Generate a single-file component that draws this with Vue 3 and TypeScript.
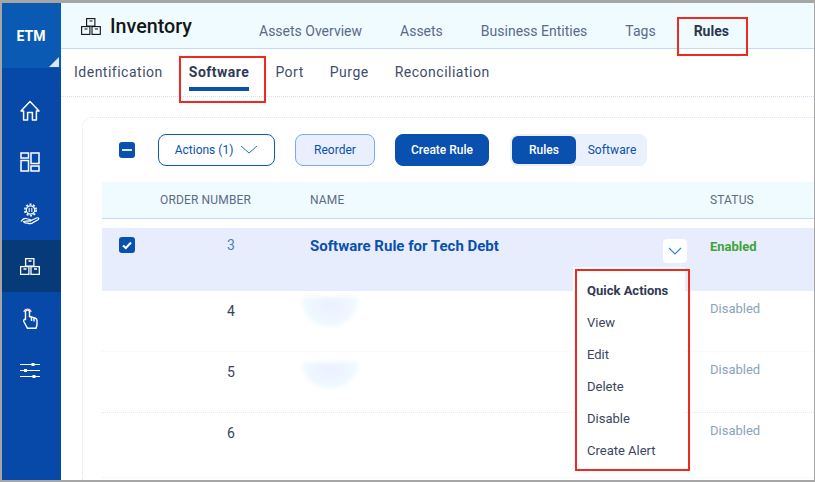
<script setup lang="ts">
const topTabs = ['Assets Overview', 'Assets', 'Business Entities', 'Tags', 'Rules']
const subTabs = ['Identification', 'Software', 'Port', 'Purge', 'Reconciliation']
const rows = [
  { n: 4, blob: 'down' },
  { n: 5, blob: 'up' },
  { n: 6, blob: '' },
]
const menu = ['View', 'Edit', 'Delete', 'Disable', 'Create Alert']
</script>

<template>
  <div class="frame">
    <aside class="sidebar">
      <div class="brand">ETM<span class="corner"></span></div>
      <nav class="rail">
        <div class="rail-item">
          <svg viewBox="0 0 20 21" width="20" height="21" fill="none" stroke="#fff" stroke-width="1.500" stroke-linejoin="round"><path d="M1 11 10 1.500 19 11h-2.600v9h-4v-7.500H7.600V20h-4v-9z"/></svg>
        </div>
        <div class="rail-item">
          <svg viewBox="0 0 20 20" width="20" height="20" fill="none" stroke="#fff" stroke-width="1.500"><rect x="1" y="1" width="7.500" height="5" /><rect x="1" y="8.500" width="7.500" height="10.500"/><rect x="11" y="1" width="8" height="10.500"/><rect x="11" y="14" width="8" height="5"/></svg>
        </div>
        <div class="rail-item">
          <svg viewBox="0 0 20 22" width="20" height="22" fill="none" stroke="#fff" stroke-width="1.200"><circle cx="10.500" cy="7" r="4.200"/><circle cx="10.500" cy="7" r="5.700" stroke-width="1.600" stroke-dasharray="2 1.600"/><path d="M9.200 5v4M11.800 5v4" stroke-width="1"/><path d="M1 18.500c2-3 4.200-3.500 6-2.700l3 .7c1.500.4 1.200 1.700-.5 1.700H7m3.500-.5 6-2.700c2-.8 3 .8 1.500 1.800l-6 3.300c-1.800.8-3.300.5-4.500 0l-2.500-.2c-.8 0-1.200-.7-1.500-1.400z"/></svg>
        </div>
        <div class="rail-item active">
          <svg viewBox="0 0 20 17" width="20" height="17" fill="none" stroke="#fff" stroke-width="1.300"><rect x="5.600" y=".6" width="8.300" height="7.500"/><rect x=".6" y="8.600" width="8.300" height="7.800"/><rect x="11" y="8.600" width="8.300" height="7.800"/><path d="M8.500 3h3M3.500 11h3M14 11h3"/></svg>
        </div>
        <div class="rail-item">
          <svg viewBox="0 0 15 22" width="15" height="22" fill="none" stroke="#fff" stroke-width="1.400" stroke-linejoin="round"><path d="M2.500 12.500V5a2 2 0 0 1 4 0v4.500l5.500 1.500c1.200.4 2 1 2 2.500V18l-1 3.300H4.500L.8 14.500c-.6-1.500 1-2.800 1.700-2z"/><path d="M.9 5a3.700 3.700 0 0 1 7.200 0" stroke="#f3c6f3"/><path d="M8.500 10v4M11 11v3.500"/></svg>
        </div>
        <div class="rail-item">
          <svg viewBox="0 0 20 15" width="20" height="15" fill="#fff" stroke="#fff" stroke-width="1"><path d="M0 1.500h20M0 7.500h20M0 13.500h20"/><rect x="11.500" y="0" width="3" height="3" stroke="none"/><rect x="4" y="6" width="3" height="3" stroke="none"/><rect x="12.500" y="12" width="3" height="3" stroke="none"/></svg>
        </div>
      </nav>
    </aside>

    <main class="main">
      <header class="topbar">
        <div class="title">
          <svg viewBox="0 0 20 17" width="20" height="17" fill="none" stroke="#111" stroke-width="1.100"><rect x="5.600" y=".6" width="8.300" height="7.500"/><rect x=".6" y="8.600" width="8.300" height="7.800"/><rect x="11" y="8.600" width="8.300" height="7.800"/><path d="M8.500 3h3M3.500 11h3M14 11h3"/></svg>
          <span>Inventory</span>
        </div>
        <div class="top-tabs">
          <span v-for="t in topTabs" :key="t" class="top-tab" :class="{ on: t === 'Rules' }">{{ t }}</span>
        </div>
      </header>

      <div class="subnav">
        <span v-for="t in subTabs" :key="t" class="sub-tab" :class="{ on: t === 'Software' }">{{ t }}</span>
      </div>

      <section class="body">
        <div class="card">
          <div class="toolbar">
            <span class="check"><i class="dash"></i></span>
            <button class="btn outline">Actions (1)
              <svg viewBox="0 0 18 9" width="18" height="9" fill="none" stroke="#2a6cc4" stroke-width="1"><path d="M1 1l8 7 8-7"/></svg>
            </button>
            <button class="btn soft">Reorder</button>
            <button class="btn solid">Create Rule</button>
            <div class="toggle">
              <span class="seg on">Rules</span>
              <span class="seg">Software</span>
            </div>
          </div>

          <div class="table">
            <div class="thead">
              <span></span><span>ORDER NUMBER</span><span>NAME</span><span>STATUS</span>
            </div>
            <div class="tr selected">
              <span class="check"><svg viewBox="0 0 16 16" width="16" height="16" fill="none" stroke="#fff" stroke-width="2"><path d="M4 8.500 6.800 11 12 5.500"/></svg></span>
              <span class="num sel-num">3</span>
              <span class="rule-name">Software Rule for Tech Debt
                <span class="row-caret"><svg viewBox="0 0 14 8" width="14" height="8" fill="none" stroke="#2f7fe0" stroke-width="1.100"><path d="M1 1l6 6 6-6"/></svg></span>
              </span>
              <span class="enabled">Enabled</span>
            </div>
            <div v-for="r in rows" :key="r.n" class="tr plain">
              <span></span>
              <span class="num">{{ r.n }}</span>
              <span class="name-cell"><i v-if="r.blob" class="blob" :class="r.blob"></i></span>
              <span class="disabled">Disabled</span>
            </div>
          </div>
        </div>
      </section>
    </main>

    <div class="popup">
      <div class="popup-head">Quick Actions</div>
      <div v-for="m in menu" :key="m" class="popup-item">{{ m }}</div>
    </div>

    <i class="mark mark-rules"></i>
    <i class="mark mark-software"></i>
  </div>
</template>

<style>
html, body { margin: 0; background: #fff; }
</style>

<style scoped>
.frame {
  position: relative;
  display: flex;
  box-sizing: border-box;
  width: 815px;
  height: 482px;
  overflow: hidden;
  padding: 3px 1px 2px 2px;
  background: #a6a6a6;
  font-family: Roboto, "Liberation Sans", sans-serif;
}
.sidebar {
  display: flex;
  flex-direction: column;
  flex: 0 0 59px;
  background: #0749a8;
}
.brand {
  position: relative;
  display: flex;
  align-items: center;
  justify-content: center;
  height: 65px;
  padding-right: 1px;
  box-sizing: border-box;
  color: #fff;
  font-size: 14px;
  font-weight: 700;
  background: #0a5ab4;
}
.corner {
  position: absolute;
  right: 2px;
  bottom: 1px;
  width: 0;
  height: 0;
  border-left: 10px solid transparent;
  border-bottom: 10px solid #dbe9fb;
}
.rail { display: flex; flex-direction: column; padding-top: 16px; }
.rail-item {
  display: flex;
  align-items: center;
  justify-content: center;
  box-sizing: border-box;
  height: 52px;
  padding-right: 3px;
}
.rail-item.active { background: #073a78; }
.main {
  display: flex;
  flex-direction: column;
  flex: 1;
  min-width: 0;
  background: #fff;
}
.topbar {
  display: flex;
  box-sizing: border-box;
  height: 46px;
  flex: none;
  padding-left: 20px;
  background: #effbff;
  border-bottom: 1px solid #c3d9f7;
}
.title {
  display: flex;
  align-items: center;
  gap: 9px;
  width: 178px;
  height: 46px;
  font-size: 19.700px;
  font-weight: 500;
  color: #15161a;
}
.top-tabs {
  display: flex;
  align-items: center;
  gap: 38px;
  height: 56px;
}
.top-tab { font-size: 14px; color: #5a6a8a; }
.top-tab.on { font-weight: 700; color: #2a3550; }
.subnav {
  display: flex;
  align-items: center;
  box-sizing: border-box;
  flex: none;
  height: 48px;
  padding: 0 0 2px 13px;
  gap: 26px;
  border-bottom: 1px dotted #cfe0f7;
}
.sub-tab {
  position: relative;
  font-size: 14px;
  letter-spacing: .5px;
  color: #3f4d6b;
}
.sub-tab.on { font-weight: 700; color: #2f3a55; }
.sub-tab.on::after {
  content: "";
  position: absolute;
  left: 0;
  right: 0;
  bottom: -11px;
  height: 4px;
  background: #0a50ae;
}
.body {
  flex: 1;
  min-height: 0;
  padding: 20px 0 0 21px;
}
.card {
  box-sizing: border-box;
  height: 100%;
  padding: 15px 0 0 19px;
  border: 1px dotted #d7e8f6;
  border-right: 0;
  border-bottom: 0;
  border-top-left-radius: 10px;
}
.toolbar {
  display: flex;
  align-items: center;
  height: 33px;
}
.check {
  display: inline-flex;
  align-items: center;
  justify-content: center;
  flex: none;
  width: 16px;
  height: 16px;
  border-radius: 3px;
  background: #0a50ae;
}
.toolbar > .check { margin: 0 23px 0 17px; }
.dash { width: 10px; height: 2px; background: #dbe7f7; }
.btn {
  display: inline-flex;
  align-items: center;
  justify-content: center;
  box-sizing: border-box;
  height: 32px;
  margin-right: 20px;
  padding: 0;
  border-radius: 8px;
  font-family: inherit;
  font-size: 12px;
  color: #0a50ae;
  background: #fff;
}
.outline { width: 117px; gap: 7px; border: 1px solid #0a5ab8; }
.soft { width: 80px; border: 1px solid #7aa9ee; background: #e9effd; }
.solid { width: 94px; margin-right: 21px; border: 1px solid #0a50ae; background: #0a50ae; color: #fff; font-weight: 500; }
.toggle {
  display: flex;
  box-sizing: border-box;
  width: 137px;
  height: 32px;
  padding: 2px;
  border-radius: 8px;
  background: #ebf0fd;
}
.seg {
  display: flex;
  align-items: center;
  justify-content: center;
  flex: 1;
  padding-left: 3px;
  font-size: 12px;
  letter-spacing: .1px;
  color: #0a50ae;
}
.seg.on {
  flex: 0 0 64px;
  padding-left: 0;
  border-radius: 6px;
  background: #0a50ae;
  color: #fff;
  font-weight: 500;
  letter-spacing: 0;
}
.table { margin: 16px 0 0 0; }
.thead, .tr {
  display: grid;
  grid-template-columns: 58px 150px 400px 1fr;
}
.thead {
  align-items: center;
  box-sizing: border-box;
  height: 37px;
  margin-bottom: 9px;
  background: #effbff;
  border-bottom: 1px solid #c3d9f7;
  font-size: 12px;
  letter-spacing: .15px;
  color: #5d6b85;
}
.tr { box-sizing: border-box; }
.selected {
  position: relative;
  height: 63px;
  padding-top: 9px;
  background: #e7edfd;
}
.selected > .check { margin-left: 17px; }
.num {
  display: block;
  padding-right: 8px;
  text-align: center;
  font-size: 14px;
  line-height: 17px;
}
.sel-num { color: #4f7db3; }
.rule-name {
  position: relative;
  padding-top: 1px;
  font-size: 15px;
  font-weight: 700;
  line-height: 17px;
  color: #0a50ae;
}
.row-caret {
  position: absolute;
  left: 353px;
  top: 2px;
  display: flex;
  align-items: center;
  justify-content: center;
  width: 24px;
  height: 24px;
  border-radius: 4px;
  background: #fff;
}
.enabled { padding-top: 1px; font-size: 13px; font-weight: 700; line-height: 17px; color: #3fa33a; }
.plain {
  height: 61px;
  padding-top: 11px;
  border-bottom: 1px dotted #dfeafa;
}
.plain:nth-child(3) { border-bottom-color: #f3f7fd; }
.plain:last-child { height: 65px; border-bottom-color: #eef4fc; }
.plain .num { color: #39435c; line-height: 17px; padding-top: 1px; }
.name-cell { position: relative; }
.blob {
  position: absolute;
  left: -8px;
  width: 56px;
  height: 30px;
  background: radial-gradient(ellipse at 50% 30%, #eceffF 0%, #effaff 70%);
  filter: blur(2px);
}
.blob.down { top: -5px; border-radius: 0 0 30px 30px; }
.blob.up { top: -1px; height: 26px; border-radius: 0 0 30px 30px; }
.disabled { font-size: 13px; line-height: 14px; color: #8aa3bd; }
.popup {
  position: absolute;
  left: 573px;
  top: 267px;
  box-sizing: border-box;
  width: 112px;
  height: 201px;
  padding: 8px 0 0 14px;
  background: #fff;
}
.popup-head, .popup-item {
  height: 32px;
  line-height: 32px;
  font-size: 13px;
  color: #3a4660;
}
.popup-head { font-weight: 700; color: #303a55; }
.mark {
  position: absolute;
  box-sizing: border-box;
  border: 2px solid #f0281e;
  pointer-events: none;
}
.mark-rules { left: 677px; top: 17px; width: 71px; height: 39px; }
.mark-software { left: 179px; top: 56px; width: 87px; height: 47px; }
.popup::after {
  content: "";
  position: absolute;
  left: 2px;
  top: 2px;
  width: 115px;
  height: 202px;
  box-sizing: border-box;
  border: 2px solid #f0281e;
}
</style>
